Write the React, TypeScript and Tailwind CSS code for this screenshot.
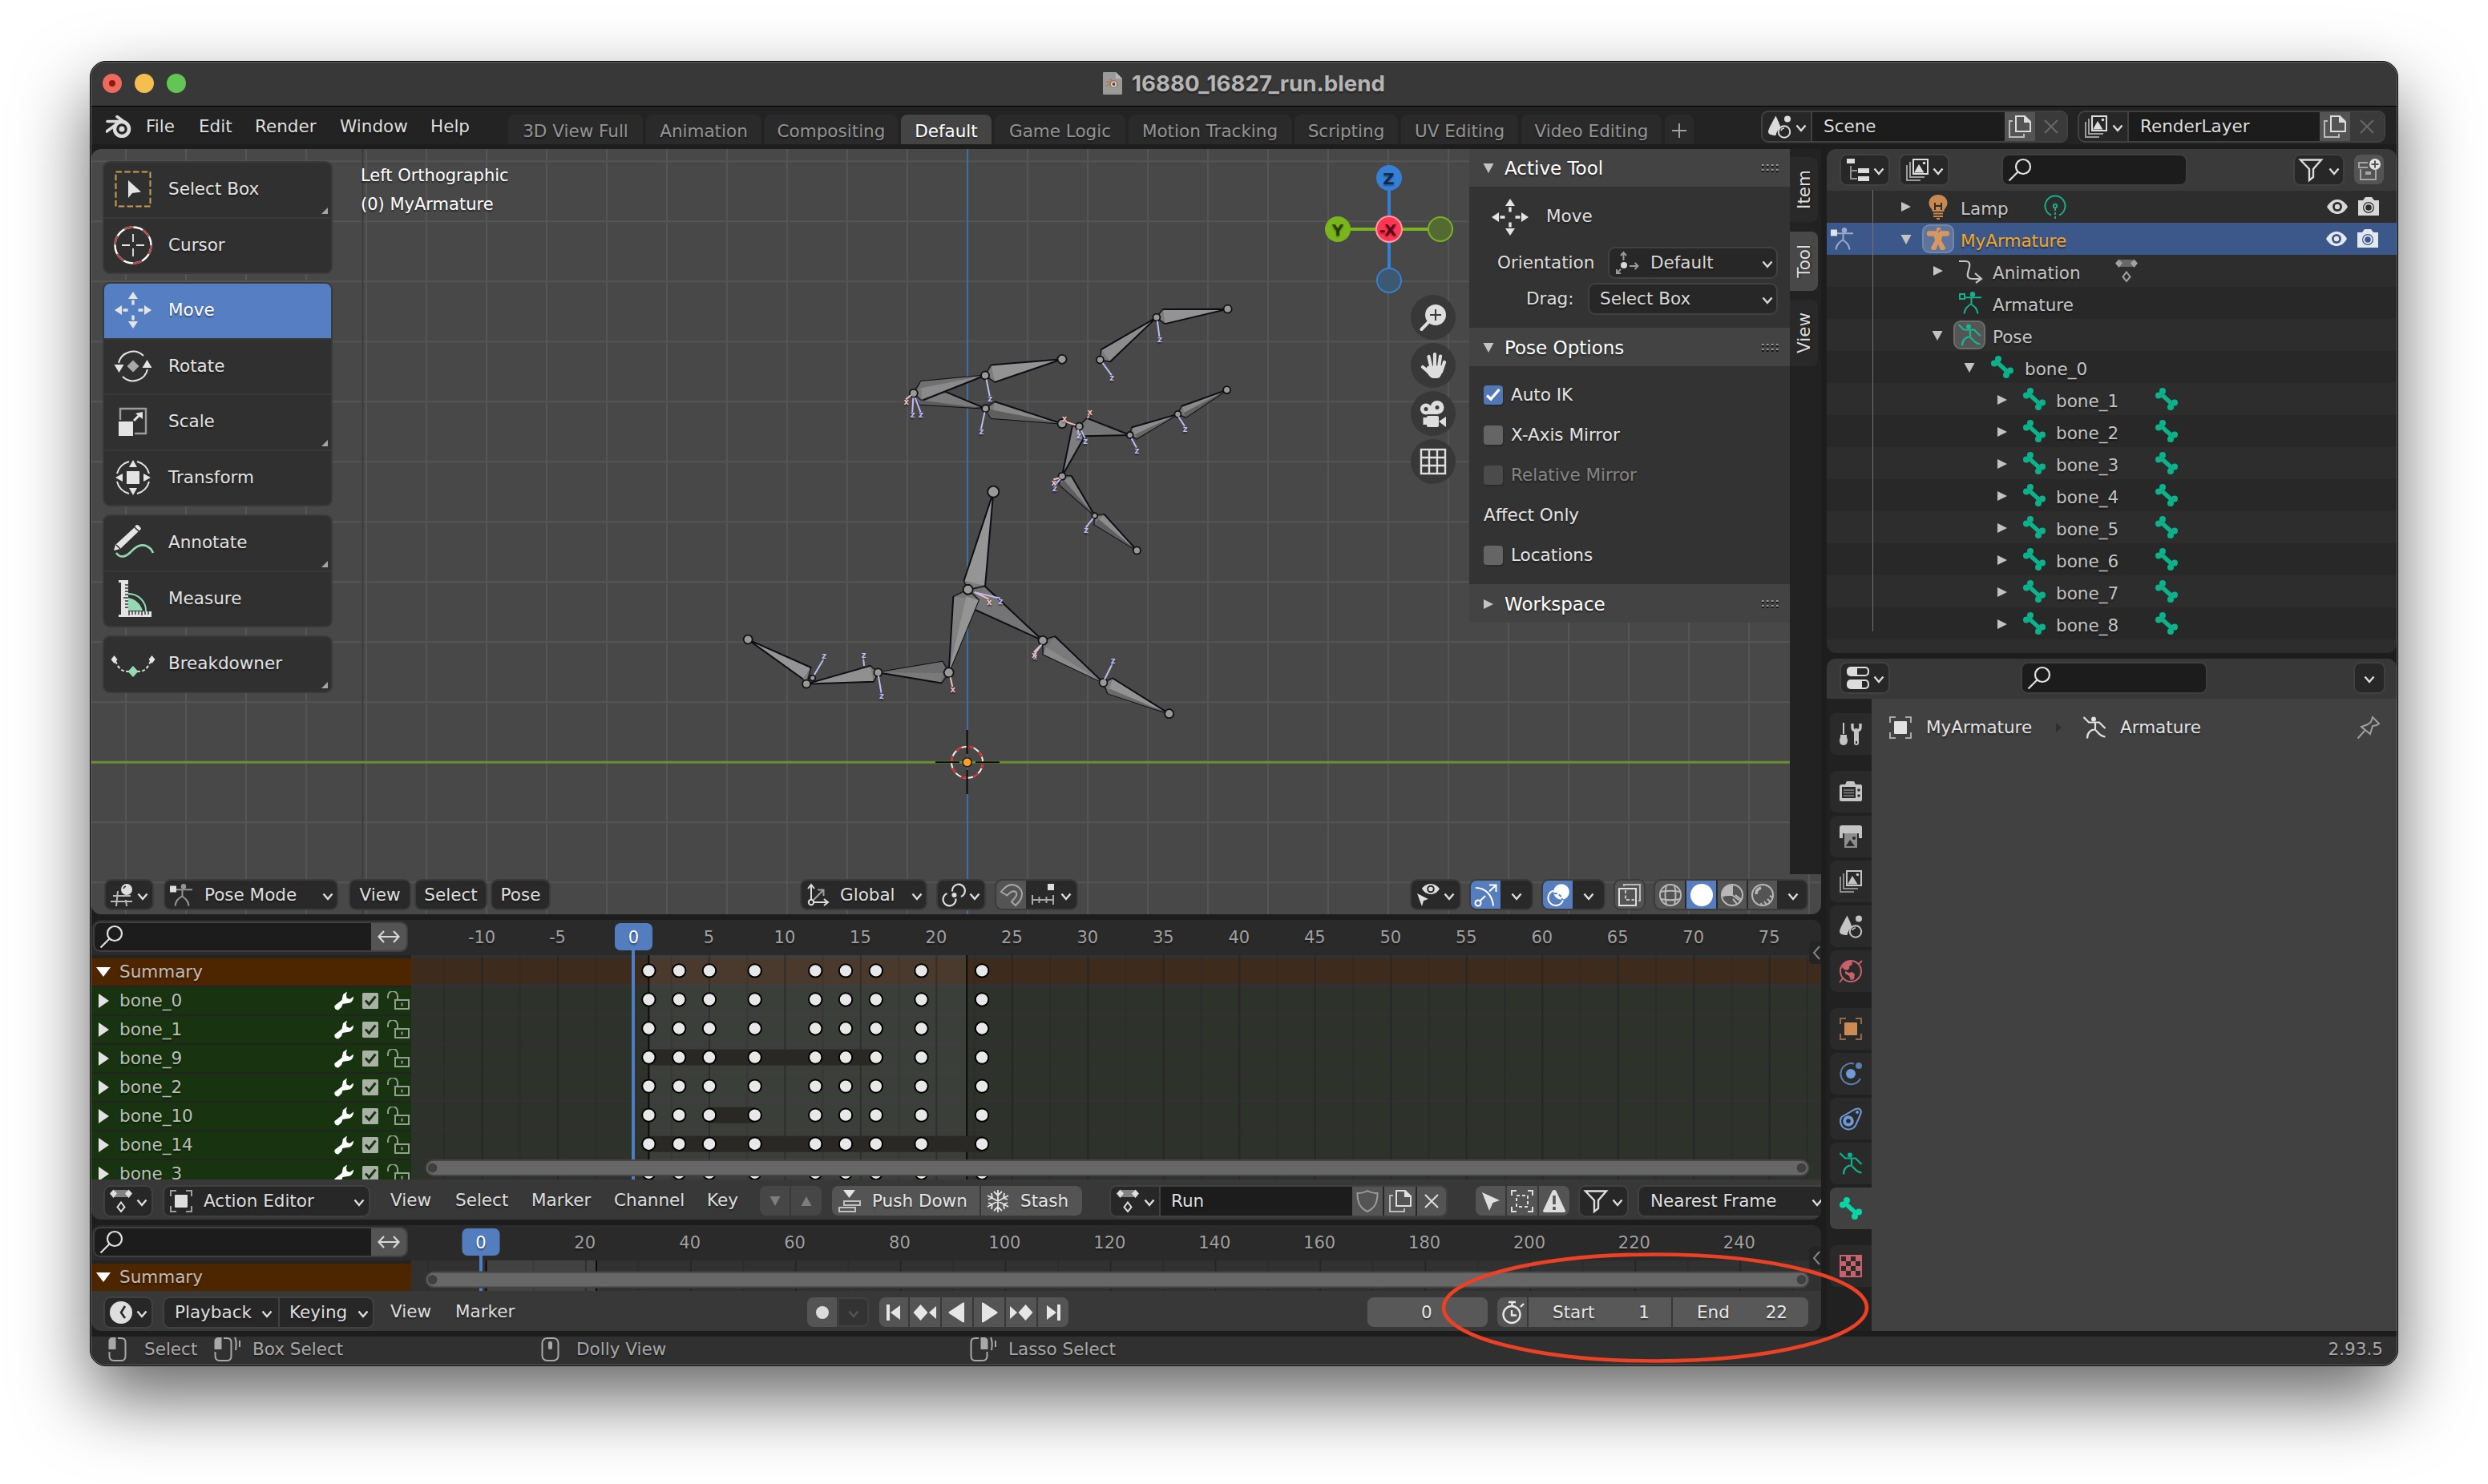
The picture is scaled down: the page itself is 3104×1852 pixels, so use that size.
import React from "react";

type Kids = { children?: React.ReactNode; className?: string };

/* ---------- icons ---------- */

const G = ({ children, className = "" }: Kids) => (
  <svg viewBox="0 0 28 28" className={`h-[28px] w-[28px] shrink-0 overflow-visible ${className}`} fill="none" stroke="currentColor" strokeWidth="2">
    {children}
  </svg>
);
const Big = ({ children }: Kids) => (
  <svg viewBox="-24 -24 48 48" className="h-[48px] w-[48px] shrink-0 overflow-visible text-[#e4e4e4]" fill="none" stroke="currentColor" strokeWidth="2">
    {children}
  </svg>
);
const Chevron = ({ className = "" }: Kids) => (
  <svg viewBox="0 0 12 8" className={`mt-1 h-[8px] w-[12px] shrink-0 overflow-visible ${className}`} fill="none" stroke="currentColor" strokeWidth="2.4">
    <path d="M0.5 0.5 6 7 11.5 0.5" />
  </svg>
);
const Down = ({ className = "" }: Kids) => (
  <svg viewBox="0 0 14 14" className={`h-[14px] w-[14px] shrink-0 ${className}`} fill="currentColor"><path d="M0.5 1h13L7 13z" /></svg>
);
const Right = ({ className = "" }: Kids) => (
  <svg viewBox="0 0 14 14" className={`h-[14px] w-[14px] shrink-0 ${className}`} fill="currentColor"><path d="M1 1v12L13 7z" /></svg>
);

const Bone = ({ className }: Kids) => (
  <G className={className}>
    <g fill="currentColor" stroke="none">
      <circle cx="9" cy="4" r="4" /><circle cx="4" cy="9.5" r="4" /><circle cx="19" cy="24" r="4" /><circle cx="24" cy="18.5" r="4" />
    </g>
    <path d="M8 8.5 20 19.5" strokeWidth="5.4" />
  </G>
);
const PoseMan = ({ className }: Kids) => (
  <G className={className}>
    <circle cx="13" cy="3.5" r="3" fill="currentColor" stroke="none" />
    <path d="M0.5 1 7 7.5h13L27.5 15M15 8v8M5 27.5C5 21 9 16.5 14 16.5c3 0 5 8 13.5 9" strokeWidth="2.2" />
  </G>
);
const StandMan = ({ className, dim, hollow }: Kids & { dim?: boolean; hollow?: boolean }) => (
  <G className={className}>
    {hollow ? <rect x="1" y="3" width="6" height="6" /> : <rect x="0" y="2.5" width="8" height="8" fill="currentColor" stroke="none" />}
    <g opacity={dim ? 0.6 : 1}>
      <circle cx="17" cy="3.2" r="3.2" fill="currentColor" stroke="none" />
      <path d="M8 7.2h20M15.5 7v9M6.5 27.5c1-7 4-9 8.5-12 4.5 3 7.5 5 8.5 12" />
    </g>
  </G>
);
const Magnifier = ({ className }: Kids) => (
  <G className={className}>
    <circle cx="18" cy="10" r="9" strokeWidth="2.2" />
    <path d="M11.5 16.5 0.5 27.5" strokeWidth="2.2" />
  </G>
);
const ViewLayers = ({ className }: Kids) => (
  <G className={className}>
    <rect x="9" y="1" width="18" height="18" />
    <path d="M10 17.5 16 7l6.5 10.5z" fill="currentColor" stroke="none" />
    <circle cx="22.5" cy="5.5" r="1.8" fill="currentColor" stroke="none" />
    <path d="M5 4v19h18M1 8v19h17" opacity="0.65" />
  </G>
);
const SceneIcon = ({ className }: Kids) => (
  <G className={className}>
    <path d="M9.5 0.5C7 5 0 17 0 20.5 0 23.5 4 25 9.5 25c1-5 3-8 6-10C14 10 12 6 9.5 0.5z" fill="currentColor" stroke="none" />
    <circle cx="24" cy="4.5" r="4" fill="currentColor" stroke="none" />
    <circle cx="20" cy="20.5" r="7.2" />
    <path d="M16 19c.5-2 2-3 4-3" strokeWidth="1.6" />
  </G>
);
const CopyIcon = ({ className }: Kids) => (
  <G className={className}>
    <path d="M9 1h11l7 7v12H9z" /><path d="M19 0v9h9z" fill="currentColor" stroke="none" />
    <path d="M5 7H1v20h18v-4" opacity="0.75" />
  </G>
);
const CrossIcon = ({ className }: Kids) => (
  <svg viewBox="0 0 18 18" className={`h-[18px] w-[18px] shrink-0 ${className ?? ""}`} fill="none" stroke="currentColor" strokeWidth="2"><path d="M1 1 17 17M17 1 1 17" /></svg>
);
const ActionIcon = ({ className }: Kids) => (
  <G className={className}>
    <path d="M6 0h16v9H6z" fill="currentColor" stroke="none" opacity="0.5" />
    <path d="M4.5 -0.5 9 4.5 4.5 10 0 4.5zM23.5 -0.5 28 4.5 23.5 10 19 4.5z" fill="currentColor" stroke="none" />
    <path d="M14 15.5 18.5 21.5 14 27 9.5 21.5z" />
  </G>
);
const ObjectIcon = ({ className }: Kids) => (
  <G className={className}>
    <rect x="6" y="6" width="16" height="16" rx="1" fill="currentColor" stroke="none" />
    <path d="M8 1H1v7M20 1h7v7M8 27H1v-7M20 27h7v-7" opacity="0.65" />
  </G>
);
const EyeIcon = ({ className, hole }: Kids & { hole: string }) => (
  <G className={className}>
    <path d="M1 14C5 7 10 5 14 5S23 7 27 14c-4 7-9 9-13 9S5 21 1 14z" fill="currentColor" stroke="none" />
    <circle cx="14" cy="14" r="6" className={hole} stroke="none" /><circle cx="14" cy="14" r="3.2" fill="currentColor" stroke="none" />
  </G>
);
const CameraIcon = ({ className, hole }: Kids & { hole: string }) => (
  <G className={className}>
    <path d="M1 6h6l3-4h8l3 4h6v19H1z" fill="currentColor" stroke="none" />
    <circle cx="14" cy="15" r="7" className={hole} stroke="none" /><circle cx="14" cy="15" r="4.8" strokeWidth="2" />
  </G>
);
const Funnel = ({ className }: Kids) => (
  <G className={className}><path d="M1 1.5h26L17 13v10l-5 4V13z" strokeWidth="2.4" /></G>
);
const MouseIcon = ({ button, drag }: { button: "l" | "m" | "r"; drag?: boolean }) => (
  <svg viewBox="0 0 34 32" className="h-[32px] w-[34px] shrink-0 overflow-visible text-[#a8a8a8]" fill="none" stroke="currentColor" strokeWidth="2">
    {button === "m" ? (
      <><rect x="1.5" y="2" width="20" height="28" rx="6" /><rect x="9" y="6" width="5" height="10" rx="2" fill="currentColor" stroke="none" /></>
    ) : button === "l" ? (
      <><path d="M12 2h4c4 0 5.5 2 5.5 5v17c0 4-2 6-5 6H7c-4 0-5.5-2-5.5-6v-5" /><path d="M9.5 1v15H0.5V6c0-3.5 2-5 5-5z" fill="currentColor" stroke="none" /></>
    ) : (
      <><path d="M11 2H7C3 2 1.5 4 1.5 7v17c0 4 2 6 5 6H16c4 0 5.5-2 5.5-6v-5" /><path d="M13.5 1v15h9V6c0-3.5-2-5-5-5z" fill="currentColor" stroke="none" /></>
    )}
    {drag && <path d="M26 1c2 4 2 10 1 16M32 5v8" />}
  </svg>
);

/* ---------- widgets ---------- */

const Dark = ({ children, className = "" }: Kids) => (
  <div className={`flex h-[40px] shrink-0 items-center rounded-[9px] border-2 border-[#414141] bg-[#272727] ${className}`}>{children}</div>
);
const Float = ({ children, className = "" }: Kids) => (
  <div className={`flex h-[39px] shrink-0 items-center rounded-[9px] border-2 border-[#3b3b3b] bg-[#292929] ${className}`}>{children}</div>
);
const Seg = ({ children, className = "" }: Kids) => (
  <div className={`flex h-full shrink-0 items-center justify-center ${className}`}>{children}</div>
);
const Search = ({ className = "" }: Kids) => (
  <div className={`flex h-[40px] shrink-0 items-center rounded-[9px] border-2 border-[#3f3f3f] bg-[#1c1c1c] pl-[7px] text-[#e2e2e2] ${className}`}>
    <Magnifier />
  </div>
);

/* ---------- top bar ---------- */

const tabs: [string, string][] = [
  ["3D View Full", "w-[168px]"], ["Animation", "w-[144px]"], ["Compositing", "w-[166px]"], ["Default", "w-[113px]"],
  ["Game Logic", "w-[163px]"], ["Motion Tracking", "w-[203px]"], ["Scripting", "w-[129px]"], ["UV Editing", "w-[146px]"], ["Video Editing", "w-[175px]"],
];

const TitleBar = () => (
  <div className="flex h-[55px] shrink-0 items-center border-b border-black bg-[#383838] pb-[2px] pl-[14px]">
    <div className="flex w-[600px] shrink-0 gap-[16px]">
      <div className="flex h-[24px] w-[24px] items-center justify-center rounded-full bg-[#ee6a5f]"><div className="h-[8px] w-[8px] rounded-full bg-[#8c1a10]" /></div>
      <div className="h-[24px] w-[24px] rounded-full bg-[#f5bf4f]" />
      <div className="h-[24px] w-[24px] rounded-full bg-[#62c554]" />
    </div>
    <div className="ml-[648px] flex items-center">
      <svg viewBox="0 0 24 28" className="h-[28px] w-[24px]">
        <path d="M1 0h15l8 8v19q0 1-1 1H1q-1 0-1-1V1q0-1 1-1z" fill="#9a9a9a" /><path d="M16 0v8h8z" fill="#b9b9b9" />
        <path d="M9 9l9 6M5 12h9M4 17.500 9 14" stroke="#b37440" strokeWidth="1.400" fill="none" strokeLinecap="round" />
        <circle cx="13.500" cy="15" r="4.300" fill="#dadada" stroke="#b37440" strokeWidth="1.600" /><circle cx="13.500" cy="15" r="1.900" fill="#274a7c" />
      </svg>
      <span className="ml-[12px] whitespace-nowrap font-['Inter'] text-[27.7px] font-bold leading-[30px] text-[#b5b5b5]">16880_16827_run.blend</span>
    </div>
  </div>
);

const TopBar = () => (
  <div className="flex h-[47px] shrink-0 bg-[#232323]">
    <svg viewBox="0 0 32 28" className="ml-[18px] mt-[11px] h-[28px] w-[32px] shrink-0" fill="none" stroke="#dcdcdc">
      <circle cx="20" cy="17" r="9" strokeWidth="4.5" /><circle cx="20" cy="17" r="3.5" fill="#dcdcdc" stroke="none" />
      <path d="M14 1.5 27 11M2 7.5h18M1 20l13-9.5" strokeWidth="3.6" strokeLinecap="round" />
    </svg>
    <div className="flex w-[457px] shrink-0 pl-[18px] pt-[12px]">
      <span className="w-[66px]">File</span><span className="w-[70px]">Edit</span><span className="w-[106px]">Render</span><span className="w-[113px]">Window</span><span>Help</span>
    </div>
    <div className="ml-[13px] flex shrink-0 gap-[4px] pt-[10px] text-[#949494]">
      {tabs.map(([t, w]) => (
        <div key={t} className={`flex h-[37px] shrink-0 items-center justify-center rounded-t-[8px] pt-[4px] ${w} ${t === "Default" ? "bg-[#444444] text-white" : "bg-[#2a2a2a]"}`}>{t}</div>
      ))}
      <div className="flex h-[37px] w-[36px] items-center justify-center rounded-t-[8px] bg-[#2a2a2a]">
        <svg viewBox="0 0 18 18" className="mt-[2px] h-[18px] w-[18px]" stroke="#a0a0a0" strokeWidth="2"><path d="M9 0v18M0 9h18" /></svg>
      </div>
    </div>
    <Dark className="ml-[84px] mt-[5px] w-[383px] overflow-hidden text-[#dcdcdc]">
      <Seg className="w-[60px] gap-[7px]"><SceneIcon /><Chevron /></Seg>
      <Seg className="w-[242px] !justify-start border-l-2 border-[#414141] bg-[#1c1c1c] pl-[14px]">Scene</Seg>
      <Seg className="w-[38px] bg-[#545454]"><CopyIcon /></Seg>
      <Seg className="grow bg-[#3a3a3a] text-[#686868]"><CrossIcon /></Seg>
    </Dark>
    <Dark className="ml-[12px] mt-[5px] w-[384px] overflow-hidden text-[#dcdcdc]">
      <Seg className="w-[60px] gap-[7px]"><ViewLayers /><Chevron /></Seg>
      <Seg className="w-[240px] !justify-start border-l-2 border-[#414141] bg-[#1c1c1c] pl-[14px]">RenderLayer</Seg>
      <Seg className="w-[38px] bg-[#545454]"><CopyIcon /></Seg>
      <Seg className="grow bg-[#3a3a3a] text-[#686868]"><CrossIcon /></Seg>
    </Dark>
  </div>
);

/* ---------- 3D viewport ---------- */

type P = [number, number];
/* rig coordinates to page pixels */
const rig = ([x, y]: P): P => [800 + x / 1.96, 330 + y / 2.3758];
const poly = (pts: P[]) => pts.map((p) => rig(p).map((n) => n.toFixed(1)).join(",")).join(" ");

/* head, side, tail, side, tone */
const bones: [P, P, P, P, string][] = [
  [[1260, 157], [1276, 133], [1434, 132], [1281, 176], "#939393"],
  [[1122, 283], [1125, 252], [1260, 157], [1147, 288], "#8c8c8c"],
  [[666, 382], [745, 378], [841, 427], [680, 415], "#7c7c7c"],
  [[841, 329], [856, 298], [1029, 281], [865, 349], "#939393"],
  [[666, 382], [684, 347], [841, 329], [686, 404], "#8a8a8a"],
  [[842, 427], [865, 407], [1029, 472], [856, 456], "#888888"],
  [[1071, 480], [1054, 480], [1029, 628], [1082, 515], "#7e7e7e"],
  [[1071, 480], [1090, 456], [1195, 506], [1083, 509], "#757575"],
  [[1195, 506], [1200, 483], [1312, 444], [1211, 517], "#8c8c8c"],
  [[1312, 444], [1322, 420], [1432, 372], [1332, 453], "#8a8a8a"],
  [[1029, 628], [1052, 627], [1109, 745], [1022, 652], "#848484"],
  [[1109, 745], [1132, 741], [1212, 848], [1108, 771], "#8c8c8c"],
  [[799, 964], [840, 954], [982, 1115], [800, 1015], "#747474"],
  [[799, 964], [789, 938], [861, 675], [841, 953], "#959595"],
  [[799, 964], [763, 985], [752, 1210], [825, 995], "#828282"],
  [[982, 1115], [1012, 1103], [1130, 1240], [983, 1156], "#7a7a7a"],
  [[1130, 1240], [1153, 1227], [1291, 1332], [1141, 1272], "#939393"],
  [[752, 1210], [737, 1178], [579, 1210], [734, 1241], "#7a7a7a"],
  [[579, 1210], [560, 1190], [404, 1244], [568, 1237], "#909090"],
  [[404, 1244], [415, 1195], [261, 1112], [395, 1229], "#949494"],
];
const facets: [P, P, P, string][] = [
  [[684, 347], [841, 329], [677, 368], "#707070"],
  [[841, 427], [856, 456], [1029, 472], "#5f5f5f"],
  [[680, 402], [841, 427], [680, 415], "#5c5c5c"],
  [[1022, 652], [1034, 640], [1109, 745], "#5e5e5e"],
  [[1108, 771], [1118, 755], [1212, 848], "#606060"],
  [[1211, 517], [1208, 504], [1312, 444], "#666666"],
  [[1332, 453], [1326, 440], [1432, 372], "#606060"],
  [[825, 995], [795, 985], [752, 1210], "#959595"],
  [[737, 1178], [579, 1210], [740, 1212], "#6c6c6c"],
  [[983, 1156], [990, 1135], [1130, 1240], "#8a8a8a"],
  [[1141, 1272], [1145, 1258], [1291, 1332], "#6a6a6a"],
];
const joints: [number, number, number][] = [
  [1260, 157, 4.5], [1434, 132, 5], [1122, 283, 4.5], [1029, 281, 5.5], [841, 329, 5], [666, 382, 5], [842, 427, 4.5], [1029, 472, 5.5],
  [1071, 480, 4.5], [1195, 506, 4], [1312, 444, 4], [1432, 372, 4.5], [1029, 628, 4.5], [1109, 745, 3.5], [1212, 848, 4.5], [861, 674, 7],
  [799, 964, 6], [752, 1210, 6], [982, 1115, 5.5], [1130, 1240, 5], [1291, 1332, 5.5], [579, 1210, 5], [404, 1244, 5], [419, 1226, 3.5], [261, 1112, 5.5],
];
/* start, end and letter of each bone axis */
const axes: [P, P, "z" | "x"][] = [
  [[1262, 168], [1267, 214], "z"], [[1128, 292], [1150, 328], "z"], [[844, 341], [852, 390], "z"], [[840, 438], [831, 488], "z"],
  [[665, 395], [663, 438], "z"], [[670, 395], [683, 438], "z"], [[660, 388], [647, 400], "x"], [[1314, 452], [1329, 480], "z"],
  [[1199, 516], [1211, 543], "z"], [[1068, 490], [1069, 500], "z"], [[1076, 492], [1085, 515], "z"], [[1062, 476], [1034, 465], "x"], [[1091, 456], [1096, 446], "x"],
  [[1025, 636], [1010, 655], "z"], [[1022, 633], [1008, 638], "x"], [[1105, 753], [1087, 780], "z"], [[815, 972], [850, 992], "x"],
  [[815, 972], [878, 990], "z"], [[979, 1127], [962, 1155], "z"], [[976, 1130], [960, 1150], "x"], [[1133, 1230], [1153, 1182], "z"],
  [[423, 1217], [446, 1170], "z"], [[545, 1190], [543, 1167], "z"], [[580, 1220], [587, 1270], "z"], [[756, 1224], [761, 1252], "x"],
];

const range = (a: number, b: number) => Array.from({ length: b - a + 1 }, (_, i) => a + i);

const Canvas = () => (
  <svg viewBox="114 186 2158 955" className="absolute inset-0 h-full w-full font-['DejaVu_Sans']">
    <rect x="114" y="186" width="2158" height="955" fill="#484848" />
    <g stroke="#555555" strokeWidth="2">
      {range(-14, 14).map((i) => <path key={i} d={`M${1207 + i * 75} 186V1141`} />)}
      {range(-10, 2).map((i) => <path key={i} d={`M114 ${951.3 + i * 75}H2272`} />)}
    </g>
    <path d="M452.5 186V1141" stroke="#3c3c3c" strokeWidth="2" />
    <path d="M114 951.3H2272" stroke="#67902e" strokeWidth="3" />
    <path d="M1207 186V911M1207 991V1141" stroke="#3f6da3" strokeWidth="2.2" />
    <g stroke="#0d0d14" strokeWidth="2">
      {bones.map(([a, b, c, d, tone], i) => (
        <g key={i} strokeLinejoin="round">
          <polygon points={poly([a, b, c, d])} fill={tone} />
          <polygon points={poly([a, b, d])} fill="#6e6e6e" fillOpacity="0.6" stroke="none" />
        </g>
      ))}
    </g>
    {facets.map(([a, b, c, f], i) => <polygon key={i} points={poly([a, b, c])} fill={f} />)}
    {joints.map(([x, y, r], i) => {
      const [cx, cy] = rig([x, y]);
      return <circle key={i} cx={cx} cy={cy} r={r} fill="#999999" stroke="#101010" strokeWidth="1.8" />;
    })}
    {axes.map(([a, b, k], i) => {
      const [x1, y1] = rig(a);
      const [x2, y2] = rig(b);
      const up = y2 < y1;
      const color = k === "z" ? "#bdbdf5" : "#f3bcbc";
      return (
        <g key={i}>
          <path d={`M${x1} ${y1}L${x2} ${y2}`} stroke={color} strokeWidth="2" />
          <text x={x2 + 0.5} y={y2 + (up ? 0 : 7)} fontSize="10" fontWeight="bold" fill={color} textAnchor="middle">{k}</text>
        </g>
      );
    })}
    {/* 3D cursor */}
    <g fill="none" strokeWidth="2">
      <circle cx="1206.6" cy="951.3" r="19.5" stroke="#f4f4f4" />
      <circle cx="1206.6" cy="951.3" r="19.5" stroke="#e01b1b" strokeDasharray="7.66 7.66" />
      <path d="M1167 951.3h30M1217 951.3h30M1206.6 911v30M1206.6 961v30" stroke="#080808" />
    </g>
    <circle cx="1206.6" cy="951.3" r="5.5" fill="#ff9d28" stroke="#1d1d1d" strokeWidth="1.5" />
    {/* navigation gizmo */}
    <g strokeWidth="4">
      <path d="M1733 222V334" stroke="#3580d6" /><path d="M1669 286H1782" stroke="#7ab51d" />
    </g>
    <circle cx="1733" cy="222" r="16" fill="#3580d6" />
    <circle cx="1669" cy="286" r="16" fill="#7ab51d" />
    <circle cx="1797" cy="286" r="15" fill="#556935" stroke="#7ab51d" strokeWidth="2" />
    <circle cx="1733" cy="350" r="15" fill="#3f5871" stroke="#3580d6" strokeWidth="2" />
    <circle cx="1733" cy="286" r="16" fill="#ff3653" stroke="#ff9aa9" strokeWidth="2" />
    <g fontSize="20" fontWeight="bold" textAnchor="middle" fillOpacity="0.75">
      <text x="1732.5" y="229.5" fill="#05162b">Z</text><text x="1669" y="293.5" fill="#142400">Y</text><text x="1731.5" y="293.5" fill="#3a0008">-X</text>
    </g>
    <g fill="#383838">
      <circle cx="1788" cy="396" r="28" /><circle cx="1788" cy="456" r="28" /><circle cx="1788" cy="516" r="28" /><circle cx="1788" cy="576" r="28" />
    </g>
    <g fill="#dedede">
      <circle cx="1791" cy="393" r="13" /><path d="M1783 401l-9.5 10" stroke="#dedede" strokeWidth="4" strokeLinecap="round" />
      <path d="M1791 386v14M1784 393h14" stroke="#383838" strokeWidth="2" />
      <path d="M1775 458l7 6M1782.5 445l3 14M1790 442v17M1797 444.5l-2 14M1802 452l-4 12" stroke="#dedede" strokeWidth="4.2" strokeLinecap="round" />
      <path d="M1781 457l17-1 2 6c-2 7-4 10-7 10h-5c-3 0-6-4-10-10z" />
      <circle cx="1779" cy="510.5" r="7" /><circle cx="1793" cy="508.5" r="8.5" /><rect x="1780" y="519" width="15" height="14" rx="2" />
      <rect x="1776" y="508" width="18" height="9" /><path d="M1795 526l9-6v13zM1775.500 521h5v9h-5z" />
      <circle cx="1779" cy="510.5" r="2.5" fill="#383838" /><circle cx="1793" cy="508.5" r="2.5" fill="#383838" />
    </g>
    <g fill="none" stroke="#dedede" strokeWidth="2.4"><rect x="1773" y="561" width="30" height="30" /><path d="M1783 561v30M1793 561v30M1773 571h30M1773 581h30" /></g>
  </svg>
);

function MoveArrows() {
  return (
    <Big>
      <path d="M0-23l6 9h-12zM0 23l6-9h-12zM-23 0l9-6v12zM23 0l-9-6v12z" fill="currentColor" stroke="none" />
      <path d="M0-12.5v6M0 6.5v6M-12.500 0h6M6.500 0h6" strokeWidth="3.4" />
    </Big>
  );
}

const tools: { name: string; more?: boolean; icon: React.ReactNode }[][] = [
  [
    { name: "Select Box", more: true, icon: <Big><rect x="-21.5" y="-21.5" width="43" height="43" stroke="#c9a052" strokeDasharray="7.5 3.25" /><path d="M-6-11v22l5-6 11-1.5z" fill="currentColor" stroke="none" /></Big> },
    { name: "Cursor", icon: <Big><circle r="22.5" stroke="#ffffff" strokeWidth="2.4" /><circle r="22.5" stroke="#a94a4a" strokeWidth="2.4" strokeDasharray="11.78 11.78" /><path d="M-14 0h10M4 0h10M0-14v10M0 4v10" strokeWidth="1.8" /></Big> },
  ],
  [
    { name: "Move", icon: <MoveArrows /> },
    { name: "Rotate", icon: <Big><path d="M-18-4A18.5 18.5 0 0 1 13-13M18 4A18.5 18.5 0 0 1-13 13" /><path d="M-23.5-2h12L-17.5 8zM11.5 2h12L17.5-8z" fill="currentColor" stroke="none" /><path d="M0-7.5 7.5 0 0 7.5-7.5 0z" fill="#a9a9a9" stroke="none" /></Big> },
    { name: "Scale", more: true, icon: <Big><path d="M-16-2v-14h32v31h-14" stroke="#9d9d9d" strokeWidth="2.4" /><rect x="-18" y="0" width="18" height="18" fill="currentColor" stroke="none" /><path d="M1-1 9-9" strokeWidth="3" /><path d="M12-12v9l-9-7z" fill="currentColor" stroke="none" /></Big> },
    { name: "Transform", icon: <Big><rect x="-8" y="-8" width="16" height="16" fill="currentColor" stroke="none" /><path d="M0-22l5 9h-10zM0 22l5-9h-10zM-22 0l9-5v10zM22 0l-9-5v10z" fill="currentColor" stroke="none" /><path d="M-20-5A20 20 0 0 1-5-20M5-20A20 20 0 0 1 20-5M20 5A20 20 0 0 1 5 20M-5 20A20 20 0 0 1-20 5" /></Big> },
  ],
  [
    { name: "Annotate", more: true, icon: <Big><path d="M-24 10 -22 3 2-19l2-3c3 0 5 2 6 5l-3 3-23 22z" fill="currentColor" stroke="none" /><path d="M2-19l6 6M-21 3l5 5" className="stroke-[#303030]" strokeWidth="1.5" /><path d="M-21 13C-16 20-9 18-3 12 4 4 10 2 16 4c5 2 7 4 9 9" stroke="#93dab3" strokeWidth="2.6" /></Big> },
    { name: "Measure", icon: <Big><path d="M-6 21V-1A22 24 0 0 1 12 15V15H-6z" fill="#93dab3" stroke="none" /><path d="M-6-6A22 21 0 0 1 16 16" stroke="#93dab3" /><path d="M-18-23h12V16H23v7h-41v-3h3V-20h-3z" fill="currentColor" stroke="none" /><path d="M-10-17h4M-10-13h4M-10-9h4M-10-5h4M-12-1h6M-10 3h4M-10 7h4M-10 11h4M-5 16v5M-1 16v4M3 16v4M7 16v4M11 16v5M15 16v4M19 16v4" className="stroke-[#303030]" strokeWidth="1.4" /></Big> },
  ],
  [{ name: "Breakdowner", more: true, icon: <Big><path d="M-22-3C-17 9-12 10-5 10M22-3C17 9 12 10 5 10" strokeDasharray="4 2.5" /><path d="M-23.5-10l4 5-4 5-4-5zM23.5-10l4 5-4 5-4-5z" fill="currentColor" stroke="none" /><path d="M0 3l6.500 7L0 17-6.500 10z" fill="#93dab3" stroke="none" /></Big> }],
];

const Toolbar = () => (
  <div className="flex w-[287px] flex-col gap-[10px]">
    {tools.map((group, gi) => (
      <div key={gi} className="flex flex-col overflow-hidden rounded-[9px] border-2 border-[#3a3a3a] bg-[#303030]">
        {group.map((t, i) => (
          <div key={t.name} className={`flex shrink-0 items-end justify-between pb-[4px] pr-[4px] ${i < group.length - 1 ? "h-[69.5px] border-b-2 border-[#383838]" : "h-[67.5px]"} ${t.name === "Move" ? "bg-[#567fc3] text-white" : "text-[#e2e2e2]"}`}>
            <div className="flex h-full items-center gap-[20px] pl-[12px] pt-[3px]">{t.icon}<span>{t.name}</span></div>
            {t.more && <svg viewBox="0 0 8 8" className="h-[8px] w-[8px]" fill="#a6a6a6"><path d="M8 0v8H0z" /></svg>}
          </div>
        ))}
      </div>
    ))}
  </div>
);

const Dots = () => (
  <svg viewBox="0 0 21 10" className="h-[10px] w-[21px]">
    {[0, 6, 12, 18].map((x) => <g key={x}><rect x={x} y="0" width="2.5" height="2" fill="#9a9a9a" /><rect x={x} y="2" width="2.5" height="2" fill="#111" /><rect x={x} y="6" width="2.5" height="2" fill="#9a9a9a" /><rect x={x} y="8" width="2.5" height="2" fill="#111" /></g>)}
  </svg>
);
const PanelHead = ({ title, open, className = "" }: { title: string; open?: boolean; className?: string }) => (
  <div className={`flex shrink-0 items-center bg-[#434343] pl-[17px] pr-[14px] text-[23px] text-white ${className}`}>
    {open ? <Down className="text-[#c4c4c4]" /> : <Right className="text-[#c4c4c4]" />}
    <span className="ml-[13px] grow">{title}</span><Dots />
  </div>
);
const Check = ({ label, on, off }: { label: string; on?: boolean; off?: boolean }) => (
  <div className="flex h-[50px] items-center">
    <div className={`flex h-[24px] w-[24px] items-center justify-center rounded-[4px] shadow-[1px_2px_1px_#2a2a2a] ${on ? "bg-[#5177b5]" : off ? "bg-[#4b4b4b]" : "bg-[#656565]"}`}>
      {on && <svg viewBox="0 0 18 16" className="h-[16px] w-[18px]" fill="none" stroke="#fff" strokeWidth="3.4"><path d="M1 8.5 6 13 16.5 1" /></svg>}
    </div>
    <span className={`ml-[10px] ${off ? "text-[#858585]" : "text-[#e4e4e4]"}`}>{label}</span>
  </div>
);

const SidePanel = () => (
  <div className="flex w-[400px] shrink-0 flex-col">
    <PanelHead title="Active Tool" open className="h-[47px]" />
    <div className="flex h-[176px] flex-col bg-[#333333]">
      <div className="flex h-[75px] items-center gap-[21px] pl-[27px]"><MoveArrows /><span className="-mt-[2px]">Move</span></div>
      <div className="flex h-[40px] items-center pl-[35px]"><span className="w-[138px]">Orientation</span>
        <Dark className="w-[212px] pl-[8px] pr-[5px] text-[#d8d8d8]">
          <G><circle cx="10" cy="17" r="4" fill="currentColor" stroke="none" /><path d="M9.500 11V1.500M6 5l3.500-4L13 5M17 18h10M23.500 14l4 4-4 4M6 22l-5 5M1 22v5h5" opacity="0.65" /></G>
          <span className="ml-[15px] grow">Default</span><Chevron />
        </Dark>
      </div>
      <div className="mt-[5px] flex h-[40px] items-center pl-[71px]"><span className="w-[77px]">Drag:</span>
        <Dark className="w-[237px] pl-[13px] pr-[5px] text-[#d8d8d8]"><span className="grow">Select Box</span><Chevron /></Dark>
      </div>
    </div>
    <PanelHead title="Pose Options" open className="h-[48px] pt-[1px]" />
    <div className="flex h-[272px] flex-col bg-[#333333] pl-[18px] pt-[11px]">
      <Check label="Auto IK" on /><Check label="X-Axis Mirror" /><Check label="Relative Mirror" off />
      <div className="flex h-[50px] items-center text-[#e4e4e4]">Affect Only</div>
      <Check label="Locations" />
    </div>
    <PanelHead title="Workspace" className="h-[48px] pt-[1px]" />
  </div>
);

const SideTabs = () => (
  <div className="flex w-[39px] shrink-0 flex-col bg-[#222222] pt-[10px]">
    {[["Item", "h-[81px] bg-[#292929] mb-[12px]"], ["Tool", "h-[74px] bg-[#484848] mb-[11px]"], ["View", "h-[83px] bg-[#292929]"]].map(([t, c]) => (
      <div key={t} className={`flex w-[35px] items-center justify-center rounded-r-[8px] ${c}`}>
        <span className="rotate-180 text-[#dedede] [writing-mode:vertical-rl]">{t}</span>
      </div>
    ))}
  </div>
);

const ViewportHeader = () => (
  <div className="flex h-[50px] shrink-0 items-start pl-[16px] pt-[6px] text-[#dedede]">
    <Float className="w-[62px] justify-center gap-[6px]">
      <G><path d="M3 15h22M0 22h27M9 9 7 28M19 20l1 8" opacity="0.8" /><circle cx="20" cy="7" r="7" fill="currentColor" stroke="none" /><path d="M16 6c.5-1.500 1.500-2.500 3-3" stroke="#292929" strokeWidth="1.500" /></G><Chevron />
    </Float>
    <Float className="ml-[12px] w-[218px] pl-[6px] pr-[5px]"><StandMan dim /><span className="ml-[15px] grow">Pose Mode</span><Chevron /></Float>
    <Float className="ml-[13px] w-[78px] justify-center">View</Float>
    <Float className="ml-[4px] w-[91px] justify-center">Select</Float>
    <Float className="ml-[4px] w-[75px] justify-center">Pose</Float>
    <Float className="ml-[311px] w-[159px] pl-[6px] pr-[5px]">
      <G><circle cx="6" cy="23" r="3.2" /><path d="M6 20V1.500M2 6l4-5 4 5M9 23h17.500M22 19l5 4-5 4" /><path d="M9 20 21 8M14 7.500h7.500V15" opacity="0.65" /></G>
      <span className="ml-[14px] grow">Global</span><Chevron />
    </Float>
    <Float className="ml-[11px] w-[62px] justify-center gap-[6px]">
      <G><path d="M12 9.500a8 8 0 1 1 11 6.500" strokeWidth="2.2" /><path d="M16.500 18.500a8 8 0 1 1-11-6.500" strokeWidth="2.2" /><circle cx="14.500" cy="14" r="3" fill="currentColor" stroke="none" /></G><Chevron />
    </Float>
    <Float className="ml-[11px] w-[104px] overflow-hidden">
      <Seg className="w-[37px] bg-[#545454] text-[#a6a6a6]"><G><path d="M1 10C7 2 13-1 20 2.500c8 4 9 12 4 19L19 27l-5-4.500 5-6c2-3 2-6-1-7-3-1-6 1-9.500 5z" /></G></Seg>
      <Seg className="grow gap-[9px]"><G><rect x="20" y="0" width="8" height="8" fill="currentColor" stroke="none" /><path d="M1 14v12M27 14v12M1 20h26M9.500 16v8M18.500 16v8" opacity="0.7" /></G><Chevron /></Seg>
    </Float>
    <Float className="ml-[414px] w-[64px] justify-center gap-[6px]">
      <G><path d="M6 6C9 2 13 0 17 0s8 2 11 6c-3 5-7 7-11 7S9 11 6 6z" fill="currentColor" stroke="none" /><circle cx="17" cy="6.500" r="3.800" stroke="#292929" /><path d="M0 12 14 19l-6 2-2 7z" fill="currentColor" stroke="none" /></G><Chevron />
    </Float>
    <Float className="ml-[10px] w-[80px] overflow-hidden">
      <Seg className="w-[37px] bg-[#567ebe] text-white"><G><circle cx="4" cy="24" r="3.500" /><path d="M7 21 13 15M18 9.500 26 2M18 1.500h8.500V10M1 5c12 0 21 9 22 22.500" /></G></Seg>
      <Seg className="grow"><Chevron /></Seg>
    </Float>
    <Float className="ml-[10px] w-[80px] overflow-hidden">
      <Seg className="w-[37px] bg-[#567ebe] text-white"><G><circle cx="18" cy="10" r="9.800" fill="currentColor" stroke="none" /><path d="M8 8.500a9.500 9.500 0 1 0 12 12" /><path d="M9 12a9 9 0 0 1 10 8" stroke="#567ebe" strokeDasharray="4 2" /></G></Seg>
      <Seg className="grow"><Chevron /></Seg>
    </Float>
    <Float className="ml-[10px] w-[40px] overflow-hidden"><Seg className="grow bg-[#545454]"><G><path d="M7 3V1h20v20h-2" opacity="0.75" /><rect x="1" y="6" width="21" height="21" /><path d="M9 8v12h11" strokeDasharray="4 2.500" opacity="0.8" /></G></Seg></Float>
    <Float className="ml-[10px] w-[193px] gap-[2px] overflow-hidden text-[#b8b8b8]">
      <Seg className="w-[37px] bg-[#545454]"><G><circle cx="14" cy="14" r="13" /><path d="M9 2C7 10 7 18 9 26M19 2c2 8 2 16 0 24M1.500 10c8-1.500 17-1.500 25 0M1.500 19c8 1.500 17 1.500 25 0" /></G></Seg>
      <Seg className="w-[37px] bg-[#567ebe] text-white"><G><circle cx="14" cy="14" r="14" fill="currentColor" stroke="none" /></G></Seg>
      <Seg className="w-[36px] bg-[#545454]"><G><circle cx="14" cy="14" r="13" /><path d="M14 14V1A13 13 0 0 0 2 16z" fill="currentColor" stroke="none" /><path d="M14 1v13h-12M14 14l11 8M18 14l8 6M15 19l5 6" /></G></Seg>
      <Seg className="w-[36px] bg-[#545454]"><G><circle cx="14" cy="14" r="13" /><path d="M6 13c0-4 2-7 6-8" strokeWidth="3.5" /><path d="M20 19l4 4M16 22l3 4M23 15l4 2M12 24l1 3" /></G></Seg>
      <Seg className="grow text-[#dedede]"><Chevron /></Seg>
    </Float>
  </div>
);

const Viewport = () => (
  <div className="relative flex h-[955px] shrink-0 flex-col overflow-hidden rounded-[12px] rounded-tr-none">
    <Canvas />
    <div className="relative flex h-[905px] shrink-0">
      <div className="shrink-0 pl-[14px] pt-[15px]"><Toolbar /></div>
      <div className="ml-[35px] grow pt-[15px] text-[21px] leading-[36px] text-white">
        <div>Left Orthographic</div><div>(0) MyArmature</div>
      </div>
      <SidePanel /><SideTabs />
    </div>
    <div className="relative"><ViewportHeader /></div>
  </div>
);

/* ---------- dope sheet ---------- */

const keyFrames = [1, 3, 5, 8, 12, 14, 16, 19, 23];
const channels = ["bone_0", "bone_1", "bone_9", "bone_2", "bone_10", "bone_14", "bone_3"];
const fx = (f: number) => 790.5 + f * 18.896;
const tx = (f: number) => 600 + f * 6.546;
const rowY = (i: number) => 1211.4 + i * 36.05;
const holds: [number, number, number][] = [[3, 1, 16], [5, 5, 8], [6, 1, 23]];

const FilterBar = () => (
  <div className="flex h-[44px] shrink-0 items-start bg-[#2a2a2a] pl-[2px] pt-[2px]">
    <div className="flex h-[38px] w-[393px] items-center overflow-hidden rounded-[9px] border-2 border-[#3f3f3f] bg-[#1c1c1c] pl-[7px] text-[#e2e2e2]">
      <Magnifier /><div className="grow" />
      <Seg className="w-[44px] bg-[#545454]"><svg viewBox="0 0 28 16" className="h-[16px] w-[28px]" fill="none" stroke="#d8d8d8" strokeWidth="2.2"><path d="M2 8h24M8 1 1.500 8 8 15M20 1l6.500 7L20 15" /></svg></Seg>
    </div>
  </div>
);
const SummaryRow = () => (
  <div className="flex h-[34px] shrink-0 items-center bg-[#4d2600] pl-[6px] text-[#c2bcb4]"><svg viewBox="0 0 18 12" className="h-[12px] w-[18px]" fill="#fff"><path d="M0 0h18L9 12z" /></svg><span className="ml-[11px]">Summary</span></div>
);
const ChannelRow = ({ name }: { name: string }) => (
  <div className="flex h-[34px] shrink-0 items-center bg-[#17330f] pl-[9px] text-[#b9c0b7]">
    <svg viewBox="0 0 13 18" className="h-[18px] w-[13px]" fill="#e2e2e2"><path d="M0 0v18L13 9z" /></svg>
    <span className="ml-[13px] grow">{name}</span>
    <svg viewBox="0 0 24 24" className="h-[24px] w-[24px]"><path d="M16 0.500 11 4l-1.500 7L0.500 18C-0.500 21 2 24 5 23.500L9 20l1.500-4 6-1c4.500 0 7.500-3.500 7.500-8.500l-4.500 3.500-4-1.500-.5-4z" fill="#fff" /></svg>
    <svg viewBox="0 0 20 20" className="ml-[11px] h-[20px] w-[20px]"><rect width="20" height="20" rx="1.5" fill="#a9b1a6" /><path d="M4 9.500 8.500 14.500 16.500 4.500" fill="none" stroke="#17330f" strokeWidth="3" /></svg>
    <svg viewBox="0 0 28 24" className="ml-[11px] mr-[2px] h-[24px] w-[28px]" fill="none" stroke="#95a091" strokeWidth="2"><path d="M1 9V6a6 6 0 0 1 12 0v5" /><rect x="10" y="11" width="17" height="11" /><path d="M18.500 14.500v4" /></svg>
  </div>
);
const FrameBadge = ({ cx, y }: { cx: number; y: number }) => (
  <><rect x={cx - 23.5} y={y} width="47" height="34" rx="7" fill="#547dc0" /><text x={cx} y={y + 25} fill="#fff" textAnchor="middle">0</text></>
);
const ScrollBar = ({ y }: { y: number }) => (
  <>
    <rect x="531.5" y={y} width="1725" height="19" rx="9.5" fill="#676767" stroke="#454545" strokeWidth="2" />
    {[539.5, 2247.5].map((x) => <circle key={x} cx={x} cy={y + 9.5} r="6.5" fill="#404040" stroke="#6c6c6c" strokeWidth="1" />)}
  </>
);
const EdgeTab = ({ y }: { y: number }) => (
  <><path d={`M2272 ${y}h-10q-5 0-5 5v18q0 5 5 5h10z`} fill="#242424" /><path d={`M2270 ${y + 6}l-7 8 7 8`} fill="none" stroke="#858585" strokeWidth="2" /></>
);

const DopeSheet = () => (
  <div className="flex h-[374px] shrink-0 flex-col overflow-hidden rounded-[12px] bg-[#383838]">
    <div className="flex h-[324px] shrink-0">
      <div className="flex w-[399px] shrink-0 flex-col overflow-hidden bg-[#232323]">
        <FilterBar />
        <div className="mt-[4px] flex flex-col gap-[2px]"><SummaryRow />{channels.map((c) => <ChannelRow key={c} name={c} />)}</div>
      </div>
      <svg viewBox="513 1148 1759 324" className="h-[324px] w-[1759px] shrink-0 font-['DejaVu_Sans'] text-[21px]">
        <rect x="513" y="1148" width="1759" height="44" fill="#2a2a2a" />
        <rect x="513" y="1192" width="1759" height="280" fill="#313131" />
        <rect x="513" y="1196" width="1759" height="32" fill="#3d2c1e" />
        {channels.map((c, i) => <rect key={c} x="513" y={1232 + i * 36.05} width="1759" height="32" fill="#2d322b" />)}
        <rect x={fx(1)} y="1192" width={fx(22) - fx(1)} height="280" fill="#fff" fillOpacity="0.065" />
        {range(-5, 31).map((i) => <path key={i} d={`M${fx(i * 2.5)} 1192V1472`} stroke="#1c1c1c" strokeOpacity={i % 2 ? 0.15 : 0.45} strokeWidth="2" />)}
        <path d={`M${fx(1)} 1192V1472M${fx(22)} 1192V1472`} stroke="#0c0c0c" strokeWidth="2" />
        {holds.map(([r, a, b]) => <rect key={r} x={fx(a)} y={rowY(r) - 10} width={fx(b) - fx(a)} height="20" fill="#292824" />)}
        {range(-2, 15).filter((i) => i !== 0).map((i) => <text key={i} x={fx(i * 5) - 0.5} y="1177" fill="#a0a0a0" textAnchor="middle">{i * 5}</text>)}
        {range(0, 7).map((r) => keyFrames.map((k) => <circle key={`${r}-${k}`} cx={fx(k)} cy={rowY(r)} r="8.2" fill="#e8e8e8" stroke="#000" strokeWidth="2" />))}
        <path d="M790 1184V1472" stroke="#547dc0" strokeWidth="4" />
        <FrameBadge cx={790.5} y={1152} />
        <ScrollBar y={1448} /><EdgeTab y={1175} />
      </svg>
    </div>
    <div className="flex h-[50px] shrink-0 items-start pl-[15px] pt-[7px] text-[#dedede]">
      <Dark className="w-[62px] justify-center gap-[6px]"><ActionIcon /><Chevron /></Dark>
      <Dark className="ml-[12px] w-[259px] pl-[7px] pr-[6px]"><ObjectIcon /><span className="ml-[14px] grow">Action Editor</span><Chevron /></Dark>
      <div className="ml-[25px] flex h-[38px] w-[461px] shrink-0 items-center"><span className="w-[81px]">View</span><span className="w-[95px]">Select</span><span className="w-[103px]">Marker</span><span className="w-[116px]">Channel</span><span>Key</span></div>
      <div className="mt-[1px] flex h-[37px] w-[77px] shrink-0 gap-[2px] overflow-hidden rounded-[8px] text-[#7d7d7d]"><Seg className="w-[37px] bg-[#464646]"><Down /></Seg><Seg className="grow bg-[#464646]"><Down className="rotate-180" /></Seg></div>
      <div className="ml-[13px] mt-[1px] flex h-[37px] w-[312px] shrink-0 gap-[2px] overflow-hidden rounded-[8px] text-[#e4e4e4]">
        <Seg className="w-[184px] !justify-start bg-[#545454] pl-[8px]"><G><path d="M6 0h15l-7.500 10z" fill="currentColor" stroke="none" /><path d="M7 14h20v5H7zM1 22h20v5H1z" opacity="0.75" /></G><span className="ml-[14px]">Push Down</span></Seg>
        <Seg className="grow !justify-start bg-[#545454] pl-[7px]"><G><path d="M14 0v28M1 7l26 14M27 7 1 21M9 2l5 5 5-5M9 26l5-5 5 5M2 12l5-2-1-6M26 12l-5-2 1-6M2 16l5 2-1 6M26 16l-5 2 1 6" strokeWidth="1.8" /></G><span className="ml-[14px]">Stash</span></Seg>
      </div>
      <Dark className="ml-[34px] w-[422px] overflow-hidden">
        <Seg className="w-[60px] gap-[7px]"><ActionIcon /><Chevron /></Seg>
        <Seg className="w-[241px] !justify-start border-l-2 border-[#414141] bg-[#1c1c1c] pl-[13px]">Run</Seg>
        <Seg className="w-[38px] bg-[#545454] text-[#9b9b9b]"><G><path d="M14 1c4 2.500 8 3 12.500 3 0 10-2 18-12.500 23C3.500 22 1.500 14 1.500 4 6 4 10 3.500 14 1z" /></G></Seg>
        <Seg className="ml-[2px] w-[39px] bg-[#545454]"><CopyIcon /></Seg>
        <Seg className="ml-[2px] grow bg-[#545454]"><CrossIcon /></Seg>
      </Dark>
      <div className="ml-[35px] mt-[1px] flex h-[37px] w-[117px] shrink-0 gap-[2px] overflow-hidden rounded-[8px]">
        <Seg className="w-[37px] bg-[#545454]"><G><path d="M3 3 25 13l-8.500 3L12 26z" fill="currentColor" stroke="none" /></G></Seg>
        <Seg className="w-[38px] bg-[#545454]"><G><path d="M7 1H1v6M21 1h6v6M7 27H1v-6M21 27h6v-6" /><rect x="7" y="7" width="14" height="14" strokeDasharray="4 3" /></G></Seg>
        <Seg className="grow bg-[#545454]"><G><path d="M14 0c1 0 2 .5 2.500 1.500L28 26c0 1-.5 2-2 2H2c-1.500 0-2-1-2-2L11.500 1.500C12 .5 13 0 14 0z" fill="currentColor" stroke="none" /><path d="M14 7v11M14 21v4" stroke="#545454" strokeWidth="3.6" /></G></Seg>
      </div>
      <Dark className="ml-[11px] w-[63px] justify-center gap-[7px]"><Funnel /><Chevron /></Dark>
      <Dark className="ml-[11px] w-[260px] pl-[14px]"><span className="w-[202px] shrink-0">Nearest Frame</span><Chevron /></Dark>
    </div>
  </div>
);

/* ---------- timeline ---------- */

const btn = "flex h-full items-center justify-center bg-[#545454]";
const Timeline = () => (
  <div className="flex h-[132px] shrink-0 flex-col overflow-hidden rounded-[12px] bg-[#383838]">
    <div className="flex h-[82px] shrink-0">
      <div className="flex w-[399px] shrink-0 flex-col overflow-hidden bg-[#232323]"><FilterBar /><div className="mt-[4px]"><SummaryRow /></div></div>
      <svg viewBox="513 1529 1759 82" className="h-[82px] w-[1759px] shrink-0 font-['DejaVu_Sans'] text-[21px]">
        <rect x="513" y="1529" width="1759" height="44" fill="#2a2a2a" /><rect x="513" y="1573" width="1759" height="38" fill="#313131" />
        <rect x={tx(1)} y="1573" width={tx(22) - tx(1)} height="38" fill="#424242" />
        {range(-1, 25).map((i) => <path key={i} d={`M${tx(i * 10)} 1573V1611`} stroke="#1c1c1c" strokeOpacity={i % 2 ? 0.15 : 0.5} strokeWidth="2" />)}
        <path d={`M${tx(1)} 1573V1611M${tx(22)} 1573V1611`} stroke="#0a0a0a" strokeWidth="2" />
        {range(1, 12).map((i) => <text key={i} x={tx(i * 20) - 1.2} y="1558" fill="#a0a0a0" textAnchor="middle">{i * 20}</text>)}
        <path d="M600 1564V1611" stroke="#547dc0" strokeWidth="4" />
        <FrameBadge cx={600} y={1533} /><ScrollBar y={1587.5} /><EdgeTab y={1556} />
      </svg>
    </div>
    <div className="flex h-[50px] shrink-0 items-start pl-[15px] pt-[7px] text-[#dedede]">
      <Dark className="w-[62px] justify-center gap-[6px]"><G><circle cx="14" cy="14" r="14" fill="currentColor" stroke="none" /><path d="M19 6 14 14l5 7" stroke="#272727" strokeWidth="2.6" /></G><Chevron /></Dark>
      <Dark className="ml-[12px] w-[264px]">
        <Seg className="w-[142px] !justify-start gap-[13px] pl-[13px]">Playback<Chevron /></Seg><Seg className="grow !justify-start gap-[14px] border-l-2 border-[#414141] pl-[12px]">Keying<Chevron /></Seg>
      </Dark>
      <div className="ml-[20px] flex h-[38px] w-[520px] shrink-0 items-center"><span className="w-[81px]">View</span><span>Marker</span></div>
      <div className="mt-[1px] flex h-[37px] w-[77px] shrink-0 overflow-hidden rounded-[8px]">
        <div className={`${btn} w-[37px]`}><div className="h-[16px] w-[16px] rounded-full bg-[#dcdcdc]" /></div>
        <Seg className="ml-[1px] grow rounded-r-[8px] border-2 border-[#404040] bg-[#333333] text-[#555555]"><Chevron /></Seg>
      </div>
      <div className="ml-[13px] mt-[1px] flex h-[37px] w-[236px] shrink-0 gap-[2px] overflow-hidden rounded-[8px] text-[#e6e6e6]">
        {[
          ["w-[36px]", "M5 4h4v20H5zM22 5v18L10 14z"],
          ["w-[38px]", "M8.500 4l9 10-9 10-9-10zM28 6v16L19 14z"],
          ["w-[38px]", "M23 2v24c-1 1-2 0-3-.5L4 15q-1.500-1 0-2L20 2.500c1-.5 2-1.500 3-.5z"],
          ["w-[38px]", "M5 2v24c1 1 2 0 3-.5L24 15q1.500-1 0-2L8 2.500C7 2 6 1 5 2z"],
          ["w-[38px]", "M19.500 4l9 10-9 10-9-10zM0 6v16l9-8z"],
          ["w-[38px]", "M19 4h4v20h-4zM6 5v18l12-9z"],
        ].map(([w, d]) => <div key={d} className={`${btn} ${w}`}><G><path d={d} fill="currentColor" stroke="none" /></G></div>)}
      </div>
      <div className="ml-[373px] mt-[1px] flex h-[37px] w-[150px] shrink-0 items-center rounded-[8px] bg-[#585858] pl-[67px] text-[#e6e6e6]">0</div>
      <div className="ml-[12px] mt-[1px] flex h-[37px] w-[388px] shrink-0 gap-[2px] overflow-hidden rounded-[8px] text-[#e6e6e6]">
        <div className={`${btn} w-[37px]`}><G><circle cx="13" cy="16.5" r="10.5" strokeWidth="2.4" /><path d="M13 11v6.500h6M9 1h9M13.500 1v4M24 7l4-4" strokeWidth="2.4" /></G></div>
        <div className="flex h-full w-[178px] items-center justify-between bg-[#585858] pl-[30px] pr-[27px]"><span>Start</span><span>1</span></div>
        <div className="flex h-full grow items-center justify-between bg-[#585858] pl-[30px] pr-[26px]"><span>End</span><span>22</span></div>
      </div>
    </div>
  </div>
);

/* ---------- outliner ---------- */

const Row = ({ odd, active, children }: Kids & { odd?: boolean; active?: boolean }) => (
  <div className={`flex h-[40px] shrink-0 items-center text-[#c3c3c3] ${active ? "bg-[#3c5789]" : odd ? "bg-[#282828]" : "bg-[#2d2d2d]"}`}>{children}</div>
);

const Outliner = () => (
  <div className="relative flex h-[629px] shrink-0 flex-col overflow-hidden rounded-[12px] bg-[#2d2d2d]">
    <div className="flex h-[52px] shrink-0 items-start bg-[#3a3a3a] pl-[16px] pt-[6px] text-[#dcdcdc]">
      <Dark className="w-[63px] justify-center gap-[6px]"><G><path d="M0 0h10v6H0zM14 12h14v6H14zM14 22h14v6H14z" fill="currentColor" stroke="none" /><path d="M5 9v16h8M5 15h8" opacity="0.6" /></G><Chevron /></Dark>
      <Dark className="ml-[11px] w-[63px] justify-center gap-[6px]"><ViewLayers /><Chevron /></Dark>
      <Search className="ml-[65px] w-[232px]" />
      <Dark className="ml-[132px] w-[64px] justify-center gap-[9px]"><Funnel /><Chevron /></Dark>
      <div className="ml-[12px] mt-[1px] flex h-[37px] w-[37px] items-center justify-center rounded-[8px] bg-[#545454]">
        <G><path d="M12 5H1v6h11M3 13v13h19V14" stroke="#a5a5a5" /><rect x="9" y="16" width="7" height="4" fill="#a5a5a5" stroke="none" /><circle cx="21" cy="7" r="7" fill="#e4e4e4" stroke="none" /><path d="M21 2.500v9M16.500 7h9" stroke="#545454" /></G>
      </div>
    </div>
    <Row>
      <Right className="ml-[92px]" /><G className="ml-[19px] text-[#c98850]"><path d="M14 -1c6.500 0 11.500 4.500 11.500 10.500 0 4-2.500 6-4 8.500v2h-15v-2C5 15.500 2.500 13.500 2.500 9.500 2.500 3.500 7.500-1 14-1z" fill="currentColor" stroke="none" /><path d="M10 9v9M18 9v9M10 13h8" stroke="#2d2d2d" /><path d="M8 22.500h12M8 26h12M12 29h4" /></G>
      <span className="ml-[14px] mt-[5px] w-[104px]">Lamp</span>
      <G className="text-[#17b08b]"><path d="M9 24.500a12.500 12.500 0 1 1 10 0" /><circle cx="14" cy="13" r="2.2" /><path d="M14 16v3M14 21v3M14 26v3" /></G>
      <EyeIcon className="ml-[324px] text-[#d8d8d8]" hole="fill-[#2d2d2d]" /><CameraIcon className="ml-[11px] text-[#d8d8d8]" hole="fill-[#2d2d2d]" />
    </Row>
    <Row active>
      <StandMan dim className="ml-[5px] text-[#dde3ee]" /><Down className="ml-[59px] mt-[2px]" />
      <div className="ml-[13px] flex h-[36px] w-[40px] items-center justify-center rounded-[9px] border-2 border-[#7387ab] bg-[#5f749d]"><G className="text-[#d79762]"><circle cx="15" cy="3" r="3.2" fill="currentColor" stroke="none" /><path d="M3 7.500h22" strokeWidth="6.400" strokeLinecap="round" /><path d="M8 8h12l-2 8 5 9q0 3-3 3h-3l-3-7-3 7H8q-3 0-3-3l5-9z" fill="currentColor" stroke="none" /><path d="M18 1.500 14 6" strokeWidth="1.500" stroke="#5f749d" /></G></div>
      <span className="ml-[8px] mt-[5px] w-[455px]"><span className="text-[#f5a623]">MyArmature</span></span>
      <EyeIcon className="-mt-[1px] text-[#e4e8ef]" hole="fill-[#3c5789]" /><CameraIcon className="-mt-[1px] ml-[11px] text-[#e4e8ef]" hole="fill-[#3c5789]" />
    </Row>
    <Row>
      <Right className="ml-[132px]" /><G className="ml-[19px]"><path d="M0 2h8c5 0 6 3 5 7l-2 8c-1 5 1 7 6 7h10M20 17l8 7-7 5" strokeWidth="2.2" /></G><span className="ml-[14px] mt-[5px] w-[153px]">Animation</span><ActionIcon className="text-[#a2a2a2]" />
    </Row>
    <Row odd><StandMan hollow className="ml-[165px] text-[#17b08b]" /><span className="ml-[14px] mt-[6px]">Armature</span></Row>
    <Row>
      <Down className="ml-[131px] mt-[2px]" /><div className="ml-[13px] flex h-[36px] w-[40px] items-center justify-center rounded-[9px] border-2 border-[#6c6c6c] bg-[#555555]"><PoseMan className="text-[#17b890]" /></div><span className="ml-[9px] mt-[6px]">Pose</span>
    </Row>
    <Row odd><Down className="ml-[171px] mt-[2px]" /><Bone className="ml-[20px] text-[#0db28b]" /><span className="ml-[14px] mt-[6px]">bone_0</span></Row>
    {range(1, 8).map((n) => (
      <Row key={n} odd={n % 2 === 0}><Right className="ml-[212px] mt-[1px]" /><Bone className="ml-[19px] text-[#0db28b]" /><span className="ml-[13px] mt-[6px] w-[124px]">{`bone_${n}`}</span><Bone className="text-[#0db28b]" /></Row>
    ))}
    <div className="absolute left-[57px] top-[51px] h-[551px] w-px bg-[#707070]" />
  </div>
);

/* ---------- properties ---------- */

const Tab = ({ children, className = "" }: Kids) => (
  <div className={`ml-[4px] flex h-[52px] shrink-0 items-center justify-center rounded-l-[8px] ${className}`}>{children}</div>
);
const grayTab = "bg-[#2a2a2a] mb-[4px] text-[#c4c4c4]";

const Properties = () => (
  <div className="flex h-[839px] shrink-0 flex-col overflow-hidden rounded-[12px] rounded-br-none bg-[#414141]">
    <div className="flex h-[50px] shrink-0 items-start bg-[#383838] pl-[16px] pt-[4px] text-[#dcdcdc]">
      <Dark className="w-[63px] justify-center gap-[6px]"><G><rect x="0" y="0" width="28" height="12" rx="5" fill="currentColor" stroke="none" /><rect x="0" y="16" width="28" height="12" rx="5" fill="currentColor" stroke="none" /><path d="M13 2h10q3 0 3 4t-3 4H13zM19 18h4q3 0 3 4t-3 4h-4z" fill="#272727" stroke="none" /></G><Chevron /></Dark>
      <Search className="ml-[163px] w-[233px]" />
      <Dark className="ml-[182px] w-[40px] justify-center"><Chevron /></Dark>
    </div>
    <div className="flex grow">
      <div className="flex w-[56px] shrink-0 flex-col bg-[#212121] pt-[18px]">
        <Tab className="mb-[20px] bg-[#2a2a2a] text-[#c4c4c4]"><G><path d="M5 0v14" /><path d="M1 15h8v3l1 3c0 4-1 7-5 7s-5-3-5-7l1-3z" fill="currentColor" stroke="none" /><path d="M16 1v5q0 4 5 4t5-4V1" strokeWidth="3.400" /><path d="M21 10v15" strokeWidth="6" strokeLinecap="round" /><path d="M21 23v3" stroke="#2a2a2a" /></G></Tab>
        <Tab className={grayTab}><G><path d="M3 5h4l2-4h9l2 4h6q2 0 2 2v17q0 2-2 2H2q-2 0-2-2V7q0-2 3-2z" fill="currentColor" stroke="none" /><rect x="3" y="8" width="17" height="14" fill="#2a2a2a" stroke="none" /><path d="M5 12h13M5 15.500h13M5 19h13" strokeWidth="1.5" opacity="0.6" /><circle cx="24" cy="12" r="1.8" fill="#2a2a2a" stroke="none" /><circle cx="24" cy="19" r="1.8" fill="#2a2a2a" stroke="none" /></G></Tab>
        <Tab className={grayTab}><G><path d="M3 0h22q3 0 3 3v13h-4v-6H4v6H0V3q0-3 3-3z" fill="currentColor" stroke="none" /><rect x="6" y="10" width="16" height="18" fill="#8d8d8d" stroke="none" /><path d="M8 26l5-8 6 8z" fill="#2a2a2a" stroke="none" /><circle cx="18" cy="16" r="2" fill="#2a2a2a" stroke="none" /></G></Tab>
        <Tab className={grayTab}><ViewLayers /></Tab>
        <Tab className={grayTab}><SceneIcon /></Tab>
        <Tab className="mb-[20px] bg-[#2a2a2a] text-[#c7616c]"><G><circle cx="14" cy="14" r="13" /><path d="M24 5l4-4M0 28l4-5" /><path d="M3 9c3-6 7-8 12-7 2 3 0 5-3 6 1 3-1 4-3 5l-3-1zM7 14l5 2 4-1 3 3-1 6-4 1-2-5-5-3z" fill="currentColor" stroke="none" /></G></Tab>
        <Tab className="mb-[4px] bg-[#2a2a2a] text-[#cc8b52]"><ObjectIcon /></Tab>
        <Tab className="mb-[4px] bg-[#2a2a2a] text-[#6f9ad6]"><G><circle cx="14" cy="14" r="6" fill="currentColor" stroke="none" /><path d="M18 1.600A13 13 0 1 0 26 20" opacity="0.75" /><circle cx="24" cy="4" r="4" fill="currentColor" stroke="none" opacity="0.75" /></G></Tab>
        <Tab className="mb-[4px] bg-[#2a2a2a] text-[#6f9ad6]"><G><path d="M2.500 12 19 2.500q7-3 8 3-.5 3-7 17A10.200 10.200 0 1 1 2.500 12z" /><circle cx="11" cy="17" r="4.800" strokeWidth="4" /><circle cx="22" cy="6" r="2" fill="currentColor" stroke="none" /></G></Tab>
        <Tab className="mb-[4px] bg-[#2a2a2a] text-[#0db28b]"><PoseMan /></Tab>
        <Tab className="mb-[20px] bg-[#414141] text-[#08d6a4]"><Bone /></Tab>
        <Tab className="bg-[#2a2a2a] text-[#c7616c]"><G><rect x="1" y="1" width="26" height="26" /><path d="M8 2h6v6H8zM20 2h6v6h-6zM2 8h6v6H2zM14 8h6v6h-6zM8 14h6v6H8zM20 14h6v6h-6zM2 20h6v6H2zM14 20h6v6h-6z" fill="currentColor" stroke="none" /></G></Tab>
      </div>
      <div className="flex h-[72px] grow items-center pl-[22px] text-[#e2e2e2]">
        <ObjectIcon /><span className="ml-[18px] w-[162px]">MyArmature</span>
        <svg viewBox="0 0 7 12" className="h-[12px] w-[7px]" fill="#2f2f2f"><path d="M0 0 7 6 0 12z" /></svg>
        <PoseMan className="ml-[27px]" /><span className="ml-[18px] grow">Armature</span>
        <G className="mr-[21px] text-[#a0a0a0]"><path d="M0.500 27.500 9 18M19 1l8 8-3 2-5 1-3 10L5 13l8-3 4-3z" /></G>
      </div>
    </div>
  </div>
);

const StatusBar = () => (
  <div className="mt-[7px] flex h-[35px] shrink-0 items-center bg-[#303030] pb-[3px] pl-[21px] text-[#a8a8a8]">
    <MouseIcon button="l" /><span className="ml-[11px] w-[87px]">Select</span>
    <MouseIcon button="l" drag /><span className="ml-[14px] w-[360px]">Box Select</span>
    <MouseIcon button="m" /><span className="ml-[10px] w-[491px]">Dolly View</span>
    <MouseIcon button="r" drag /><span className="ml-[14px] grow">Lasso Select</span>
    <span className="mr-[17px]">2.93.5</span>
  </div>
);

export default function App() {
  return (
    <div className="relative h-[1852px] w-[3104px] overflow-hidden bg-white pl-[112px] pt-[76px] font-['DejaVu_Sans',sans-serif] text-[21.5px] leading-[26px] text-[#dedede]">
      <div className="h-[1629px] w-[2880px] rounded-[20px] border border-black bg-[#6a6a6a] p-px shadow-[0_40px_90px_rgba(0,0,0,0.6)] [text-shadow:0_2px_2px_rgba(0,0,0,0.45)]">
        <div className="flex h-full flex-col overflow-hidden rounded-[18px] bg-[#1d1d1d]">
          <TitleBar />
          <TopBar />
          <div className="mt-[6px] flex h-[1475px] shrink-0 gap-[7px]">
            <div className="flex w-[2158px] shrink-0 flex-col gap-[7px]"><Viewport /><DopeSheet /><Timeline /></div>
            <div className="flex w-[711px] shrink-0 flex-col gap-[7px]"><Outliner /><Properties /></div>
          </div>
          <StatusBar />
        </div>
      </div>
      <svg viewBox="0 0 540 150" className="absolute left-[1795px] top-[1557px] h-[150px] w-[540px]">
        <ellipse cx="270" cy="75" rx="264" ry="66.5" fill="none" stroke="#ec4125" strokeWidth="4.6" />
      </svg>
    </div>
  );
}
